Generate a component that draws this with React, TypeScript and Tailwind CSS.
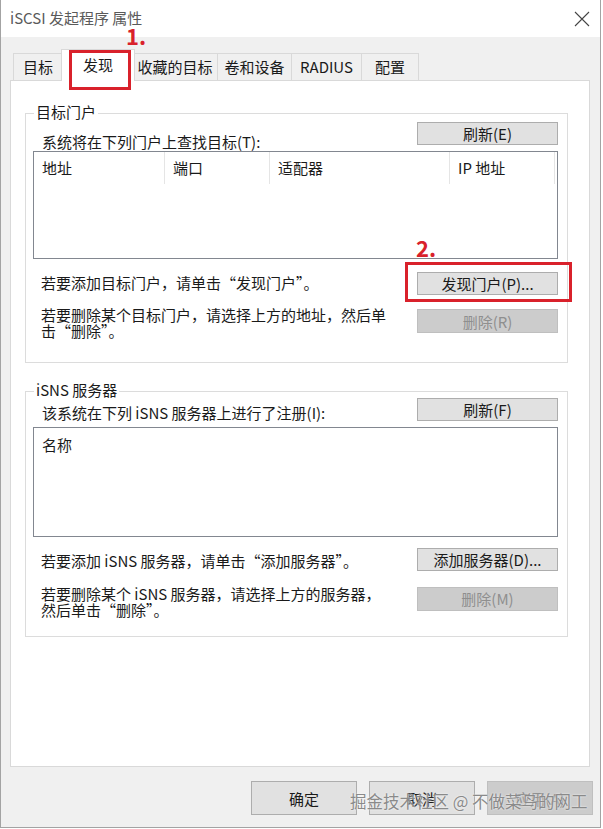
import React from "react";

interface BtnProps {
  label: string;
  disabled?: boolean;
  className?: string;
}

// Win32 style push button
const Btn = ({ label, disabled, className = "" }: BtnProps): JSX.Element => (
  <div
    className={`flex shrink-0 items-center justify-center border text-[15px] leading-none ${
      disabled
        ? "border-[#bfbfbf] bg-[#cccccc] text-[#8f8f8f]"
        : "border-[#adadad] bg-[#e1e1e1] text-[#1a1a1a]"
    } ${className}`}
  >
    {label}
  </div>
);

interface GroupProps {
  title: string;
  className?: string;
  children: React.ReactNode;
}

const Group = ({ title, className = "", children }: GroupProps): JSX.Element => (
  <div className={`relative border border-[#dcdcdc] pl-[7px] pr-[9px] ${className}`}>
    <span className="absolute left-[8px] top-[-12px] bg-white px-[2px] text-[15px] leading-[20px] text-[#1a1a1a]">
      {title}
    </span>
    {children}
  </div>
);

const tabs = [
  { name: "目标", w: "w-[50px]" },
  { name: "发现", w: "w-[74px]", active: true },
  { name: "收藏的目标", w: "w-[86px]" },
  { name: "卷和设备", w: "w-[75px]" },
  { name: "RADIUS", w: "w-[71px]" },
  { name: "配置", w: "w-[58px]" },
];

const App = (): JSX.Element => {
  return (
    <div className="relative h-[829px] w-[603px] overflow-hidden bg-white font-['Noto_Sans_CJK_SC',sans-serif] text-[#1a1a1a]">
      <div className="flex h-[828px] w-[601px] flex-col border-x border-b border-[#a3a3a3] bg-[#f0f0f0]">
        {/* Title bar */}
        <div className="flex h-[37px] shrink-0 items-center bg-white pl-[9px] pr-[10px]">
          <span className="text-[15px] text-[#5a5a5a]">iSCSI 发起程序 属性</span>
          <svg className="ml-auto" width="16" height="16" viewBox="0 0 16 16">
            <path d="M1 1 L15 15 M15 1 L1 15" stroke="#444" strokeWidth="1.1" fill="none" />
          </svg>
        </div>

        {/* Tabs */}
        <div className="flex h-[43px] shrink-0 items-end pl-[12px]">
          {tabs.map((t) =>
            t.active ? (
              <div
                key={t.name}
                className={`relative z-10 -mx-[2px] -mb-[1px] flex h-[32px] ${t.w} items-start justify-center border-x border-t border-[#d9d9d9] bg-white pt-[4px] text-[15px]`}
              >
                {t.name}
              </div>
            ) : (
              <div
                key={t.name}
                className={`flex h-[27px] ${t.w} items-center justify-center border border-b-0 border-[#d9d9d9] bg-[#f0f0f0] text-[15px] -ml-[1px] first:ml-0`}
              >
                {t.name}
              </div>
            )
          )}
        </div>

        {/* Tab panel */}
        <div className="ml-[9px] flex h-[687px] w-[580px] shrink-0 flex-col border border-[#d9d9d9] bg-white pl-[14px] pt-[32px]">
          <Group title="目标门户" className="h-[250px] w-[543px] pt-[8px]">
            <div className="flex h-[29px] justify-between">
              <span className="mb-[1px] self-end pl-[9px] text-[15px] leading-[16px]">系统将在下列门户上查找目标(T):</span>
              <Btn label="刷新(E)" className="h-[23px] w-[141px]" />
            </div>
            <div className="h-[108px] border border-[#828790] bg-white">
              <div className="flex h-[32px] text-[15px]">
                <div className="flex w-[131px] items-center border-r border-[#e5e5e5] pl-[8px]">地址</div>
                <div className="flex w-[105px] items-center border-r border-[#e5e5e5] pl-[8px]">端口</div>
                <div className="flex w-[180px] items-center border-r border-[#e5e5e5] pl-[8px]">适配器</div>
                <div className="flex w-[105px] items-center border-r border-[#e5e5e5] pl-[8px]">IP 地址</div>
              </div>
            </div>
            <div className="mt-[13px] flex items-center justify-between">
              <span className="pl-[8px] text-[15px]">若要添加目标门户，请单击“发现门户”。</span>
              <Btn label="发现门户(P)..." className="h-[23px] w-[141px]" />
            </div>
            <div className="mt-[14px] flex items-start justify-between">
              <span className="-mt-[2px] pl-[8px] text-[15px] leading-[16px]">
                若要删除某个目标门户，请选择上方的地址，然后单
                <br />
                击“删除”。
              </span>
              <Btn label="删除(R)" disabled className="h-[24px] w-[141px]" />
            </div>
          </Group>

          <Group title="iSNS 服务器" className="mt-[28px] h-[246px] w-[543px] pt-[6px]">
            <div className="flex h-[29px] justify-between">
              <span className="mb-[6px] self-end pl-[9px] text-[15px] leading-[16px]">
                该系统在下列 iSNS 服务器上进行了注册(I):
              </span>
              <Btn label="刷新(F)" className="h-[23px] w-[141px]" />
            </div>
            <div className="h-[110px] border border-[#828790] bg-white">
              <div className="flex h-[35px] items-center pl-[8px] text-[15px]">名称</div>
            </div>
            <div className="mt-[9px] flex items-center justify-between">
              <span className="pl-[8px] pt-[4px] text-[15px]">若要添加 iSNS 服务器，请单击“添加服务器”。</span>
              <Btn label="添加服务器(D)..." className="h-[23px] w-[141px]" />
            </div>
            <div className="mt-[14px] flex items-start justify-between">
              <span className="-mt-[1px] pl-[8px] text-[15px] leading-[16px]">
                若要删除某个 iSNS 服务器，请选择上方的服务器，
                <br />
                然后单击“删除”。
              </span>
              <Btn label="删除(M)" disabled className="h-[24px] w-[141px]" />
            </div>
          </Group>
        </div>

        {/* Dialog buttons */}
        <div className="mt-[14px] flex justify-end gap-[12px] pr-[7px]">
          <Btn label="确定" className="h-[34px] w-[106px]" />
          <Btn label="取消" className="h-[34px] w-[106px]" />
          <Btn label="应用(A)" disabled className="h-[34px] w-[106px]" />
        </div>
      </div>

      {/* Annotations */}
      <div className="absolute left-[69px] top-[50px] z-20 h-[40px] w-[62px] border-[3px] border-[#d9212b]" />
      <div className="absolute left-[126px] top-[24px] z-20 text-[22px] font-bold leading-none text-[#d9212b]">1.</div>
      <div className="absolute left-[405px] top-[262px] z-20 h-[40px] w-[167px] border-[3px] border-[#d9212b]" />
      <div className="absolute left-[416px] top-[236px] z-20 text-[22px] font-bold leading-none text-[#d9212b]">2.</div>

      {/* Watermark */}
      <div className="absolute left-[350px] top-[790px] z-20 text-[16.5px] leading-[22px] text-[#8a8a8a] [text-shadow:0_0_2px_#ffffff]">
        掘金技术社区 @ 不做菜鸟的网工
      </div>
    </div>
  );
};

export default App;
